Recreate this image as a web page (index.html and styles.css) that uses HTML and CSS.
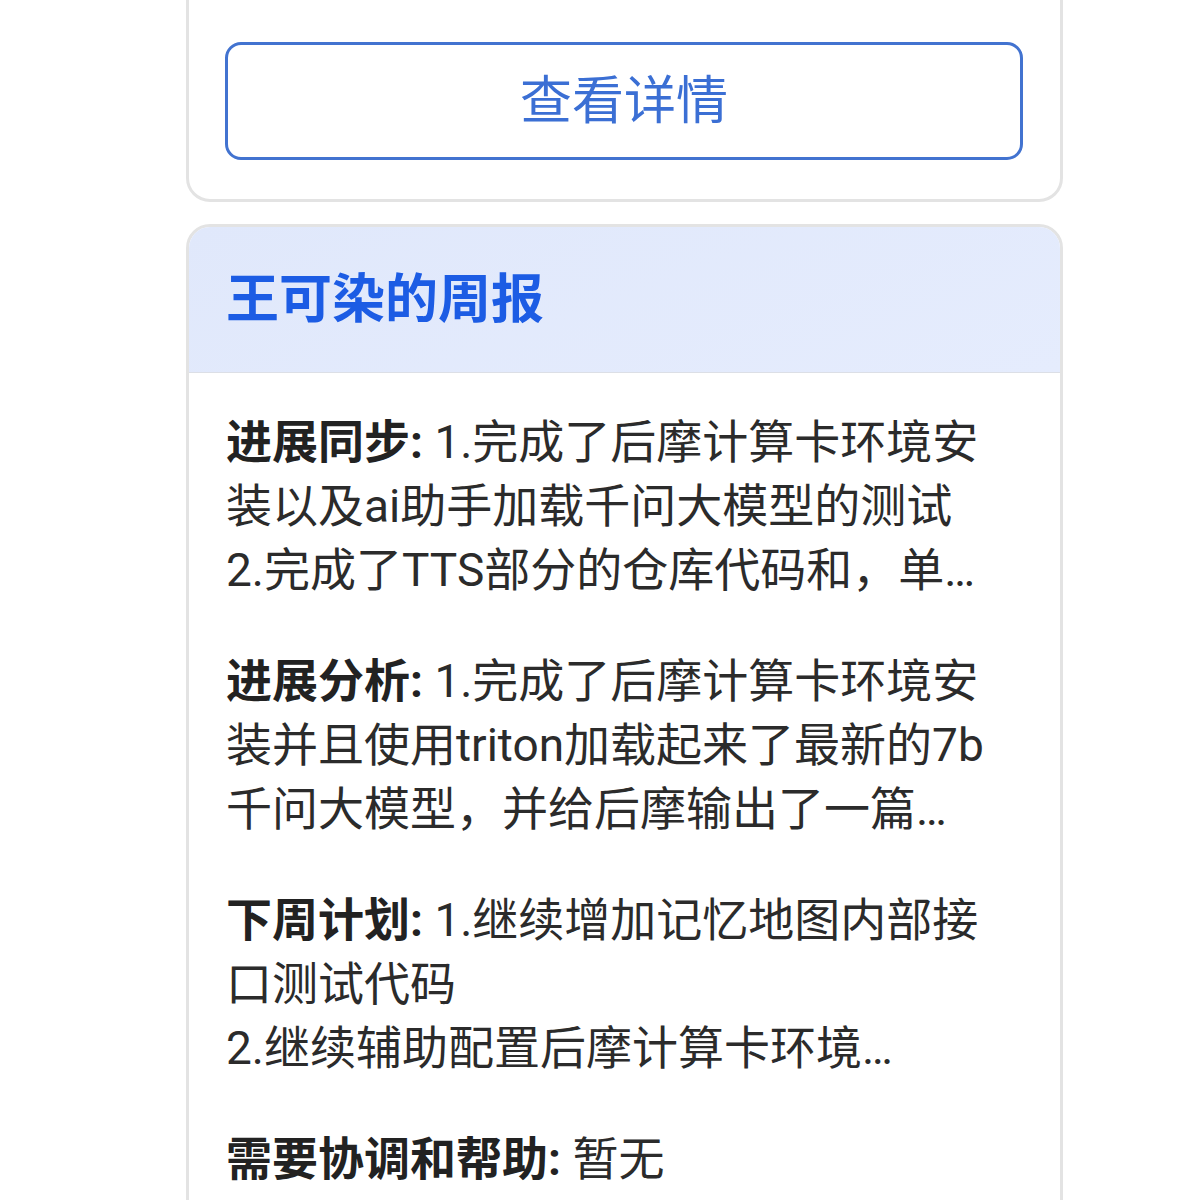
FILE: index.html
```html
<!DOCTYPE html>
<html lang="zh-CN">
<head>
    <meta charset="UTF-8">
    <meta name="viewport" content="width=device-width, initial-scale=1.0">
    <title>周报</title>
    <link rel="stylesheet" href="styles.css">
</head>
<body>

<div class="page">
    <div class="card card-top">
        <button class="detail-btn" type="button">查看详情</button>
    </div>

    <div class="card report">
        <div class="report-head">
            <h2 class="report-title">王可染的周报</h2>
        </div>
        <div class="report-body">
            <div class="item"><b>进展同步:</b> 1.完成了后摩计算卡环境安装以及ai助手加载千问大模型的测试<br>2.完成了TTS部分的仓库代码和，单元测试的编写以及接口联调</div>
            <div class="item"><b>进展分析:</b> 1.完成了后摩计算卡环境安装并且使用triton加载起来了最新的7b千问大模型，并给后摩输出了一篇测试报告，后续继续跟进</div>
            <div class="item"><b>下周计划:</b> 1.继续增加记忆地图内部接口测试代码<br>2.继续辅助配置后摩计算卡环境<br>3.跟进TTS部分的联调</div>
            <div class="item"><b>需要协调和帮助:</b> 暂无</div>
        </div>
    </div>
</div>

</body>
</html>
```

FILE: styles.css
```css
* {
    box-sizing: border-box;
}

body {
    font-family: "Noto Sans CJK SC", "Noto Sans", sans-serif;
    margin: 0;
    background-color: #fff;
    color: #2b2b2b;
    overflow: hidden;
}

.page {
    width: 877px;
    margin-left: 186px;
}

.card {
    background: #fff;
    border: 3px solid #e3e3e3;
    border-radius: 24px;
    overflow: hidden;
}

.card-top {
    margin-top: -30px;
    padding: 69px 37px 39px 36px;
}

.detail-btn {
    display: block;
    width: 100%;
    height: 118px;
    padding: 0 0 10px;
    border: 3px solid #4273d0;
    border-radius: 16px;
    background: #fff;
    color: #3b6fd4;
    font-family: inherit;
    font-size: 52px;
    cursor: pointer;
}

.report {
    margin-top: 22px;
}

.report-head {
    display: flex;
    align-items: center;
    height: 146px;
    padding: 0 37px 10px;
    background: linear-gradient(160deg, #e0e8fb, #e5ecfd);
    border-bottom: 1px solid #dcdfe6;
}

.report-title {
    margin: 0;
    font-size: 53px;
    font-weight: 700;
    color: #1c5ce4;
    line-height: 60px;
}

.report-body {
    padding: 37px 72px 0 37px;
}

.item {
    font-family: Roboto, "Noto Sans CJK SC", sans-serif;
    font-size: 46px;
    line-height: 64px;
    margin-bottom: 47px;
    display: -webkit-box;
    -webkit-box-orient: vertical;
    -webkit-line-clamp: 3;
    overflow: hidden;
}

.item b {
    font-weight: 700;
    color: #222;
}
```
